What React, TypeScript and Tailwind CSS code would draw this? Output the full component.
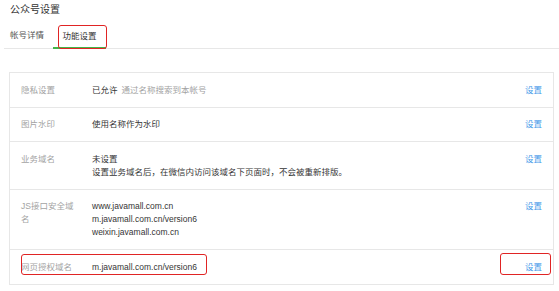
import React from "react";

const rows = [
  {
    label: "隐私设置",
    value: (
      <span>
        已允许<span className="text-[#a3a3a3] ml-[4px]">通过名称搜索到本帐号</span>
      </span>
    ),
  },
  { label: "图片水印", value: <span>使用名称作为水印</span> },
  {
    label: "业务域名",
    value: (
      <div>
        <div>未设置</div>
        <div>设置业务域名后，在微信内访问该域名下页面时，不会被重新排版。</div>
      </div>
    ),
  },
  {
    label: "JS接口安全域名",
    value: (
      <div>
        <div>www.javamall.com.cn</div>
        <div>m.javamall.com.cn/version6</div>
        <div>weixin.javamall.com.cn</div>
      </div>
    ),
  },
  { label: "网页授权域名", value: <span>m.javamall.com.cn/version6</span> },
];

export default function App() {
  return (
    <div className="relative w-[559px] h-[291px] overflow-hidden bg-white font-['Liberation_Sans','Noto_Sans_CJK_SC',sans-serif]">
      <div className="pl-[10px] pt-[3px] text-[10px] leading-[14px] text-[#333]">公众号设置</div>
      <div className="ml-[4px] h-[32px] flex items-end border-b border-[#e7e7e7]">
        <div className="pl-[6px] pr-[9px] pb-[6px] text-[8.5px] leading-[13px] text-[#555]">帐号详情</div>
        <div className="px-[9.5px] pb-[4px] text-[8.5px] leading-[13px] text-[#333] border-b-2 border-[#44b549] -mb-px">
          功能设置
        </div>
      </div>
      <div className="ml-[9px] mt-[23px] w-[545px] border border-[#e7e7e7]">
        {rows.map((r, i) => (
          <div
            key={i}
            className={
              "flex items-start pl-[11px] pr-[11px] pt-[10.5px] pb-[10px] text-[8.5px] leading-[13px] " +
              (i < rows.length - 1 ? "border-b border-[#e7e7e7]" : "")
            }
          >
            <div className="w-[71px] pr-[15px] shrink-0 text-[#a3a3a3]">{r.label}</div>
            <div className="flex-1 text-[#353535]">{r.value}</div>
            <div className="shrink-0 text-[#459ae9]">设置</div>
          </div>
        ))}
      </div>
      <div className="absolute left-[58px] top-[25px] w-[49px] h-[24px] border-[1.5px] border-[#e02424] rounded-[3px]" />
      <div className="absolute left-[21px] top-[254px] w-[186px] h-[21px] border-[1.5px] border-[#e02424] rounded-[3px]" />
      <div className="absolute left-[500px] top-[253px] w-[51px] h-[22px] border-[1.5px] border-[#e02424] rounded-[3px]" />
    </div>
  );
}
